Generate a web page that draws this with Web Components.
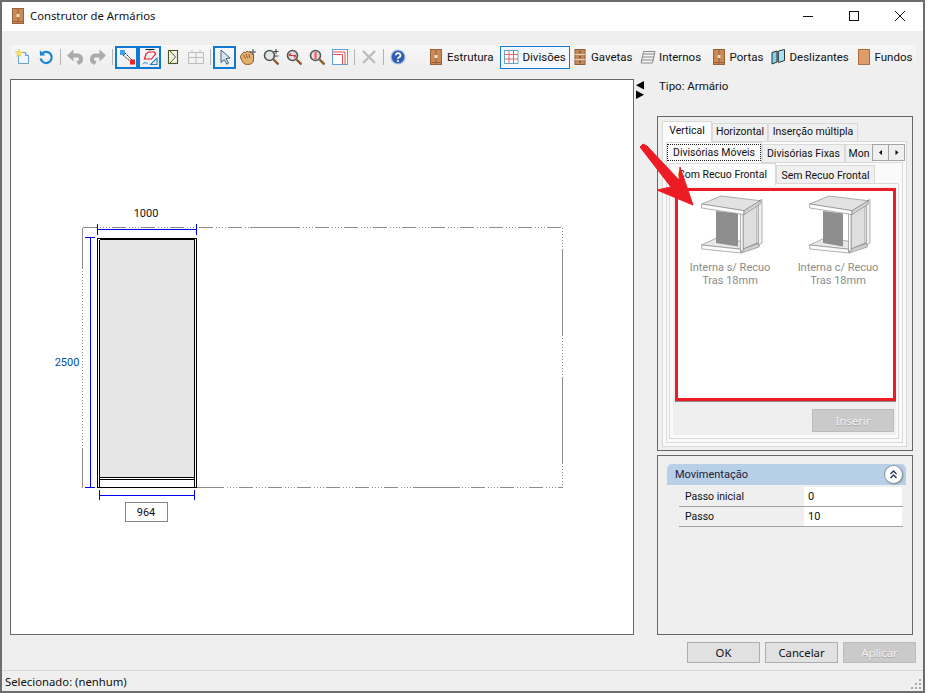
<!DOCTYPE html>
<html lang="pt">
<head>
<meta charset="utf-8">
<title>Construtor de Armários</title>
<style>
  html, body { margin: 0; background: #fff; }
  body { font: 11.5px Roboto, "Liberation Sans", sans-serif; color: #111; }
</style>
</head>
<body>
<win-dialog>
  <title-bar slot="title">Construtor de Armários</title-bar>

  <tool-bar slot="tools">
    <tool-btn icon="new"></tool-btn>
    <tool-btn icon="refresh"></tool-btn>
    <tool-sep></tool-sep>
    <tool-btn icon="undo"></tool-btn>
    <tool-btn icon="redo"></tool-btn>
    <tool-sep></tool-sep>
    <tool-btn icon="snap" active></tool-btn>
    <tool-btn icon="shapes" active></tool-btn>
    <tool-btn icon="bracket"></tool-btn>
    <tool-btn icon="grid-off"></tool-btn>
    <tool-sep></tool-sep>
    <tool-btn icon="cursor" active></tool-btn>
    <tool-btn icon="hand"></tool-btn>
    <tool-btn icon="zoom-pm"></tool-btn>
    <tool-btn icon="zoom-h"></tool-btn>
    <tool-btn icon="zoom-v"></tool-btn>
    <tool-btn icon="corner"></tool-btn>
    <tool-sep></tool-sep>
    <tool-btn icon="cross"></tool-btn>
    <tool-sep></tool-sep>
    <tool-btn icon="help"></tool-btn>
    <tool-gap></tool-gap>
    <tool-btn icon="door" label="Estrutura" style="--w:73px;--pad:0px"></tool-btn>
    <tool-btn icon="grid" label="Divisões" active style="--w:70px;--pad:2.5px"></tool-btn>
    <tool-btn icon="drawers" label="Gavetas" style="--w:67px;--pad:1px"></tool-btn>
    <tool-btn icon="shelves" label="Internos" style="--w:72px;--pad:2px"></tool-btn>
    <tool-btn icon="door" label="Portas" style="--w:58px;--pad:.5px"></tool-btn>
    <tool-btn icon="sliding" label="Deslizantes" style="--w:86px;--pad:2.5px"></tool-btn>
    <tool-btn icon="back" label="Fundos" style="--w:63px;--pad:1.5px"></tool-btn>
  </tool-bar>

  <drawing-view slot="canvas"></drawing-view>
  <split-arrows slot="split"></split-arrows>

  <side-column slot="side">
    <span slot="type">Tipo: Armário</span>
    <frame-box slot="top">
      <tab-box tabs="Vertical|Horizontal|Inserção múltipla" widths="50,56,90" style="--pl:3px;--tbm:2px">
        <tab-box tabs="Divisórias Móveis|Divisórias Fixas|Mon" widths="96,83,28" focus scroll style="--pl:2px;--tbm:0px">
          <tab-box tabs="Com Recuo Frontal|Sem Recuo Frontal" widths="107,99" last style="--tt:2px">
            <item-list>
              <item-card line1="Interna s/ Recuo" line2="Tras 18mm" back="26" backw="21"></item-card>
              <item-card line1="Interna c/ Recuo" line2="Tras 18mm" back="25" backw="19"></item-card>
            </item-list>
            <action-row>
              <dlg-button disabled style="--w:82px;--h:23px">Inserir</dlg-button>
            </action-row>
          </tab-box>
        </tab-box>
      </tab-box>
    </frame-box>
    <frame-box slot="bottom">
      <prop-group title="Movimentação">
        <prop-row label="Passo inicial" value="0"></prop-row>
        <prop-row label="Passo" value="10"></prop-row>
      </prop-group>
    </frame-box>
  </side-column>

  <dlg-button slot="buttons">OK</dlg-button>
  <dlg-button slot="buttons">Cancelar</dlg-button>
  <dlg-button slot="buttons" disabled>Aplicar</dlg-button>

  <span slot="status">Selecionado: (nenhum)</span>
</win-dialog>

<script>
const ICONS = {
  new: `<path d="M3.5 3.5h7l3 3v8h-10z" fill="#eef6fd" stroke="#6f9fc9"/><path d="M10.5 3.5v3h3" fill="#cfe3f5" stroke="#6f9fc9"/><path d="M4 0l1 2.6L7.8 3 5.6 4.7 6.3 7.5 4 6 1.7 7.5l.7-2.8L.2 3 3 2.6z" fill="#f7e36a" stroke="#e0c040" stroke-width=".4"/>`,
  refresh: `<path d="M4 4.6A5.6 5.6 0 1 1 2.6 9.5" fill="none" stroke="#1b84d6" stroke-width="2.2"/><path d="M1.8 1.2l.2 5.6 5.4-.6z" fill="#1b84d6"/>`,
  undo: `<path d="M5 6.5h5a3.6 3.6 0 0 1 2 6.8l-1.500 1" fill="none" stroke="#ababab" stroke-width="4"/><path d="M0 6.5l6.500-6v12z" fill="#ababab"/>`,
  redo: `<path d="M11 6.5H6a3.6 3.6 0 0 0-2 6.800l1.500 1" fill="none" stroke="#ababab" stroke-width="4"/><path d="M16 6.500l-6.500-6v12z" fill="#ababab"/>`,
  snap: `<rect x="1" y="1" width="5" height="5" fill="#46a0e6"/><path d="M4 6l9 8M6 4l8 8" stroke="#222" stroke-width="1" stroke-dasharray="2 1"/><rect x="11" y="10.5" width="5" height="5" fill="#e8262a"/>`,
  shapes: `<path d="M3.5 .5h9M8 .5v1" stroke="#222" fill="none"/><path d="M4 5l2.5-2h6l1 2-4 5H2.5z" fill="none" stroke="#e21c24" stroke-width="1.2"/><path d="M15 15.5H8.5L15 9z" fill="none" stroke="#1b84d6" stroke-width="1.1"/><path d="M.8 15a3 3 0 0 1 5 0" fill="none" stroke="#1b84d6"/>`,
  bracket: `<rect x="3.5" y="1.5" width="9" height="13" fill="#f4f4ea" stroke="#4d5a22" stroke-width="1.1"/><path d="M5 2l5.5 6L5 14" fill="none" stroke="#4d5a22"/>`,
  "grid-off": `<path d="M.5 3.5h15v11H.5zM.5 8.5h15M8 3.5v11M4 1v2.5M12 1v2.5" fill="#f3f3f3" stroke="#bdbdbd"/>`,
  cursor: `<path d="M4 1l9 8-4 .6 2.6 4.6-1.8 1-2.6-4.6L4 13.5z" fill="#dbe6f3" stroke="#3c5f86"/>`,
  hand: `<path d="M0 8c1-2 2.5-4 4-5l1.5.5L7 2l1.5 1 1.5-.5L11.5 4l2 1.5V12c-1 2.5-3 3.5-6 3.5-3.5 0-5-2-5.5-4z" fill="#e2b06c" stroke="#7a4d1e" stroke-width=".9"/><path d="M3.5 6l2 3.5M6 5l1.5 4M9 5l.5 4" stroke="#7a4d1e" stroke-width=".8"/><path d="M13 0v6M10 3h6" stroke="#444"/>`,
  "zoom-pm": `<circle cx="6.5" cy="6.5" r="5" fill="#dfe6ea" stroke="#555" stroke-width="1.6"/><path d="M10.5 10.5l5 5" stroke="#8a5a2a" stroke-width="2.4"/><path d="M13 0v5M10.5 2.5h5M10.5 7h5" stroke="#444"/>`,
  "zoom-h": `<circle cx="6.5" cy="6.5" r="5" fill="#e0e0e0" stroke="#555" stroke-width="1.6"/><path d="M10.5 10.5l5 5" stroke="#8a5a2a" stroke-width="2.4"/><path d="M3 6.5h7M3 6.5l2-2M10 6.5l-2 2" stroke="#d8323a" stroke-width="1.2" fill="none"/>`,
  "zoom-v": `<circle cx="6.5" cy="6.5" r="5" fill="#e0e0e0" stroke="#555" stroke-width="1.6"/><path d="M10.5 10.5l5 5" stroke="#8a5a2a" stroke-width="2.4"/><path d="M6.5 2.8v7.4" stroke="#e8656b" stroke-width="2.4"/>`,
  corner: `<rect x=".5" y=".5" width="15" height="15" fill="#fdfdfd" stroke="#5da2d8"/><path d="M.5 3h12.5v12.5M.5 5.5h10v10" fill="none" stroke="#e05055"/>`,
  cross: `<path d="M2 2l12 12M14 2L2 14" stroke="#bcbcbc" stroke-width="2.4"/>`,
  help: `<circle cx="8" cy="8" r="7" fill="#2f5fae" stroke="#a9c1e2" stroke-width="1.2"/><path d="M5.8 6.2a2.3 2.2 0 1 1 3.2 2.1c-.7.4-1 .8-1 1.6" fill="none" stroke="#fff" stroke-width="1.7"/><circle cx="8" cy="12" r="1.1" fill="#fff"/>`,
  door: `<rect x="2.5" y=".5" width="11" height="15" fill="#c98a57" stroke="#9a6236"/><path d="M8 .5v15M2.5 13.5h11" stroke="#9a6236"/><rect x="6.6" y="6" width="2.8" height="3" fill="#eee0cf"/>`,
  grid: `<rect x=".5" y="1.5" width="13.5" height="13" fill="#fff" stroke="#6ba5d4"/><path d="M.5 5.5h13.5M.5 10h13.5M5 1.5v13M9.5 1.5v13" stroke="#e2646a"/>`,
  drawers: `<rect x="3" y=".5" width="10" height="15" fill="#c08a5c" stroke="#8d5d34"/><path d="M3 5.5h10M3 10.5h10" stroke="#e8d0b4"/><path d="M7 3h2M7 8h2M7 13h2" stroke="#503318"/>`,
  shelves: `<path d="M3.5 2.5H15L12.5 14H1z" fill="#f2f2f2" stroke="#8a8a8a"/><path d="M3 5h11.5M2.4 8h11.6M1.8 11h11.6" stroke="#8a8a8a"/>`,
  sliding: `<path d="M1 3.5l5-1.5v11l-5 2z" fill="#7fd2ea" stroke="#333"/><path d="M7.5 2l6-1.5v11l-6 2z" fill="#a4e2f2" stroke="#333"/><path d="M6 2l1.5 0v11H6z" fill="#666"/>`,
  back: `<rect x="2.5" y=".5" width="11" height="15" fill="#df9d68" stroke="#a96e3d"/>`
};

class UiIcon extends HTMLElement {
  constructor() {
    super();
    this.attachShadow({ mode: "open" });
  }

  connectedCallback() {
    const name = this.getAttribute("name");
    this.shadowRoot.innerHTML = /* html */`
    <style>
      :host { display: inline-flex; width: 16px; height: 16px; flex: none; }
      svg { display: block; }
    </style>
    <svg width="16" height="16" viewBox="0 0 16 16">${ICONS[name] || ""}</svg>`;
  }
}
customElements.define("ui-icon", UiIcon);

class WinDialog extends HTMLElement {
  constructor() {
    super();
    this.attachShadow({ mode: "open" });
    this.shadowRoot.innerHTML = /* html */`
    <style>
      :host {
        display: flex;
        flex-direction: column;
        box-sizing: border-box;
        width: 925px;
        height: 693px;
        border: 2px solid #6d6d6d;
        background: #efefef;
        position: relative;
      }
      .main { display: flex; margin: 10px 0 0 8px; height: 556px; }
      .buttons { display: flex; justify-content: flex-end; gap: 5px; margin: 7px 7px 0 0; }
      .status {
        position: relative;
        flex: 1;
        margin-top: 7px;
        border-top: 1px solid #d7d7d7;
        padding: 1px 0 0 3px;
        display: flex;
        align-items: center;
        font: 11.3px "Noto Sans", "Liberation Sans", sans-serif;
      }
      .grip { position: absolute; right: 1px; bottom: 1px; }
      .arrow { position: absolute; z-index: 5; left: -2px; top: -2px; pointer-events: none; }
    </style>
    <slot name="title"></slot>
    <slot name="tools"></slot>
    <div class="main">
      <slot name="canvas"></slot>
      <slot name="split"></slot>
      <slot name="side"></slot>
    </div>
    <div class="buttons"><slot name="buttons"></slot></div>
    <div class="status">
      <slot name="status"></slot>
      <svg class="grip" width="12" height="12" fill="#a9a9a9">
        <rect x="9" y="1" width="2" height="2"/><rect x="5" y="5" width="2" height="2"/><rect x="9" y="5" width="2" height="2"/>
        <rect x="1" y="9" width="2" height="2"/><rect x="5" y="9" width="2" height="2"/><rect x="9" y="9" width="2" height="2"/>
      </svg>
    </div>
    <svg class="arrow" width="925" height="693">
      <path d="M640 147 643 144 647 146 679 180 680 167 693 205 657 190 671 187z" fill="#ed1c24" stroke="#ed1c24" stroke-linejoin="round"/>
    </svg>`;
  }
}
customElements.define("win-dialog", WinDialog);

class TitleBar extends HTMLElement {
  constructor() {
    super();
    this.attachShadow({ mode: "open" });
    this.shadowRoot.innerHTML = /* html */`
    <style>
      :host {
        display: flex;
        align-items: center;
        box-sizing: border-box;
        height: 29px;
        padding-bottom: 2px;
        background: #fff;
        font: 11.3px "Noto Sans", "Liberation Sans", sans-serif;
        color: #111;
      }
      .app { margin: 0 4px 0 8px; }
      .text { flex: 1; }
      .wbtn { width: 46px; height: 27px; display: flex; align-items: center; justify-content: center; }
      svg { display: block; }
    </style>
    <ui-icon class="app" name="door"></ui-icon>
    <span class="text"><slot></slot></span>
    <span class="wbtn"><svg width="10" height="10"><path d="M0 5.5h10" stroke="#111"/></svg></span>
    <span class="wbtn"><svg width="10" height="10"><rect x=".5" y=".5" width="9" height="9" fill="none" stroke="#111"/></svg></span>
    <span class="wbtn"><svg width="10" height="10"><path d="M0 0l10 10M10 0L0 10" stroke="#111"/></svg></span>`;
  }
}
customElements.define("title-bar", TitleBar);

class ToolBar extends HTMLElement {
  constructor() {
    super();
    this.attachShadow({ mode: "open" });
    this.shadowRoot.innerHTML = /* html */`
    <style>
      :host {
        display: flex;
        align-items: center;
        height: 24px;
        margin: 14px 7px 0 9px;
        background: linear-gradient(#f7f7f7, #eeeeee);
        border-radius: 3px 3px 0 0;
      }
    </style>
    <slot></slot>`;
  }
}
customElements.define("tool-bar", ToolBar);

class ToolBtn extends HTMLElement {
  constructor() {
    super();
    this.attachShadow({ mode: "open" });
  }

  connectedCallback() {
    const label = this.getAttribute("label");
    this.shadowRoot.innerHTML = /* html */`
    <style>
      :host {
        display: flex;
        align-items: center;
        justify-content: ${label ? "flex-start" : "center"};
        box-sizing: border-box;
        flex: none;
        gap: 3px;
        width: var(--w, 23px);
        height: 23px;
        padding-left: var(--pad, 0);
        border: 1px solid transparent;
        font-size: 11.5px;
        white-space: nowrap;
      }
      :host([active]) { border: 2px solid #0f78d2; }
      :host([active][label]) { border-width: 1px; background: #f4f8fc; }
    </style>
    <ui-icon name="${this.getAttribute("icon")}"></ui-icon>${label ? `<span>${label}</span>` : ""}`;
  }
}
customElements.define("tool-btn", ToolBtn);

class ToolSep extends HTMLElement {
  constructor() {
    super();
    this.attachShadow({ mode: "open" });
    this.shadowRoot.innerHTML = /* html */`
    <style>
      :host { display: flex; flex: none; width: 6px; height: 16px; justify-content: center; }
      i { width: 1px; background: #b4b4b4; }
    </style>
    <i></i>`;
  }
}
customElements.define("tool-sep", ToolSep);

class ToolGap extends HTMLElement {
  constructor() {
    super();
    this.attachShadow({ mode: "open" }).innerHTML = `<style>:host { display: block; flex: none; width: 18px; }</style>`;
  }
}
customElements.define("tool-gap", ToolGap);

class DrawingView extends HTMLElement {
  constructor() {
    super();
    this.attachShadow({ mode: "open" });
    this.shadowRoot.innerHTML = /* html */`
    <style>
      :host {
        display: block;
        box-sizing: border-box;
        flex: none;
        width: 624px;
        height: 556px;
        border: 1px solid #666;
        background: #fff;
      }
      svg { display: block; }
      text { font: 11px Roboto, "Liberation Sans", sans-serif; text-anchor: middle; }
    </style>
    <svg width="622" height="554" viewBox="11 80 622 554" shape-rendering="crispEdges">
      <g fill="none" stroke="#8c8c8c">
        <path d="M82.5 228V268M82.5 449V487.5M197 487.5H210M250 227.5H290M415 487.5H460M562.5 250V335M562.5 377V463"/>
        <path d="M82.5 268V449M562.5 227.5V250M562.5 335V377M562.5 463V487.5" stroke-dasharray="1 2"/>
        <path d="M82.5 227.5H562.5M210 487.5H562.5" stroke-dasharray="14 3 1 2 1 2 1 2 1 2"/>
      </g>
      <rect x="100" y="240" width="94" height="237" fill="#e6e6e6"/>
      <g fill="none" stroke="#000">
        <rect x="97.5" y="238.5" width="99" height="249"/>
        <path d="M99.5 239.5V487M194.5 239.5V487M99.5 239.5H194.5"/>
        <path d="M99.5 477.5H194.5M99.5 479.5H194.5"/>
      </g>
      <g fill="none" stroke="#0000f0">
        <path d="M97.5 224V235M196.5 224V235M97.5 229.5H196.5"/>
        <path d="M85 237.5H95M85 487.5H95M90.5 237.5V487.5"/>
        <path d="M99.5 490V500M194.5 490V500M99.5 495.5H194.5"/>
      </g>
      <text x="146" y="217" fill="#111">1000</text>
      <text x="67" y="366" fill="#00509e">2500</text>
      <rect x="125.5" y="502.5" width="42" height="19" fill="#fff" stroke="#858585"/>
      <text x="146" y="516" fill="#111">964</text>
    </svg>`;
  }
}
customElements.define("drawing-view", DrawingView);

class SplitArrows extends HTMLElement {
  constructor() {
    super();
    this.attachShadow({ mode: "open" });
    this.shadowRoot.innerHTML = /* html */`
    <style>
      :host { display: block; flex: none; width: 8px; margin: 2px 13px 0 2px; }
      svg { display: block; }
    </style>
    <svg width="8" height="18"><path d="M8 0v8.5L0 4.2zM0 9.5v8.5l8-4.2z" fill="#000"/></svg>`;
  }
}
customElements.define("split-arrows", SplitArrows);

class SideColumn extends HTMLElement {
  constructor() {
    super();
    this.attachShadow({ mode: "open" });
    this.shadowRoot.innerHTML = /* html */`
    <style>
      :host { display: flex; flex-direction: column; width: 256px; flex: none; }
      .type { height: 37px; padding: 0 0 0 2px; line-height: 14px; box-sizing: border-box; }
      ::slotted([slot="top"]) { height: 335px; }
      ::slotted([slot="bottom"]) { height: 180px; margin-top: 4px; }
    </style>
    <div class="type"><slot name="type"></slot></div>
    <slot name="top"></slot>
    <slot name="bottom"></slot>`;
  }
}
customElements.define("side-column", SideColumn);

class FrameBox extends HTMLElement {
  constructor() {
    super();
    this.attachShadow({ mode: "open" });
    this.shadowRoot.innerHTML = /* html */`
    <style>
      :host {
        display: flex;
        box-sizing: border-box;
        border: 1px solid #666;
        padding: 4px 5px 3px 4px;
      }
    </style>
    <slot></slot>`;
  }
}
customElements.define("frame-box", FrameBox);

class TabBox extends HTMLElement {
  constructor() {
    super();
    this.attachShadow({ mode: "open" });
  }

  connectedCallback() {
    const names = this.getAttribute("tabs").split("|");
    const widths = this.getAttribute("widths").split(",");
    const focus = this.hasAttribute("focus");
    const tabs = names.map((name, i) => /* html */`
      <div class="tab ${i === 0 ? "on" : ""}" style="width:${widths[i]}px">
        <span class="${i === 0 && focus ? "focus" : ""}">${name}</span>
      </div>`).join("");
    const scroll = this.hasAttribute("scroll") ? /* html */`
      <div class="scroll">
        <svg width="15" height="15"><path d="M9 5v5L6 7.500z" fill="#000"/></svg>
        <svg width="15" height="15"><path d="M6.500 5v5l3-2.500z" fill="#000"/></svg>
      </div>` : "";
    this.shadowRoot.innerHTML = /* html */`
    <style>
      :host { display: flex; flex-direction: column; flex: 1; min-width: 0; }
      .strip { display: flex; flex: none; height: 20px; position: relative; white-space: nowrap; font-size: 10.5px; }
      .tab {
        box-sizing: border-box;
        flex: none;
        height: 18px;
        margin-top: 2px;
        padding: var(--tt, 0px) 0 var(--tbm, 0px);
        border: 1px solid #d9d9d9;
        border-width: 1px 1px 0 1px;
        background: #f0f0f0;
        display: flex;
        align-items: center;
        justify-content: center;
        overflow: hidden;
      }
      .tab.on {
        position: relative;
        z-index: 1;
        height: 22px;
        margin-top: 0;
        padding-bottom: calc(3px + var(--tbm, 0px));
        background: #fcfcfc;
      }
      .focus { outline: 1px dotted #222; box-sizing: border-box; width: 92px; padding: 1px 0; text-align: center; }
      .page {
        flex: 1;
        display: flex;
        flex-direction: column;
        min-height: 0;
        box-sizing: border-box;
        border: 1px solid #d9d9d9;
        background: #fafafa;
        padding: ${this.hasAttribute("last") ? "3px 2px 3px 3px" : "0 3px 3px var(--pl, 3px)"};
      }
      .inner { flex: 1; display: flex; flex-direction: column; min-height: 0; }
      :host([last]) .inner { background: #efefef; padding: 1px 0 0 2px; }
      .scroll {
        position: absolute;
        z-index: 2;
        right: -2px;
        top: 2px;
        display: flex;
      }
      .scroll svg { display: block; border: 1px solid #a6a6a6; margin-left: -1px; background: #efefef; }
    </style>
    <div class="strip">${tabs}${scroll}</div>
    <div class="page"><div class="inner"><slot></slot></div></div>`;
  }
}
customElements.define("tab-box", TabBox);

class ItemList extends HTMLElement {
  constructor() {
    super();
    this.attachShadow({ mode: "open" });
    this.shadowRoot.innerHTML = /* html */`
    <style>
      :host {
        display: flex;
        align-items: flex-start;
        box-sizing: border-box;
        height: 213px;
        padding: 7px 4px 0 1px;
        background: #fff;
        position: relative;
        box-shadow: 0 1px 0 #8d8d8d;
      }
      .mark { position: absolute; inset: 0; border: 3px solid #ed1c24; }
    </style>
    <slot></slot>
    <div class="mark"></div>`;
  }
}
customElements.define("item-list", ItemList);

class ItemCard extends HTMLElement {
  constructor() {
    super();
    this.attachShadow({ mode: "open" });
  }

  connectedCallback() {
    const x = +this.getAttribute("back");
    const w = +this.getAttribute("backw");
    this.shadowRoot.innerHTML = /* html */`
    <style>
      :host {
        display: flex;
        flex-direction: column;
        align-items: center;
        flex: none;
        width: 108px;
        color: #8b8b8b;
        font-size: 11px;
        line-height: 13px;
        text-align: center;
      }
      svg { display: block; margin-bottom: 4px; margin-left: 2px; }
    </style>
    <svg width="64" height="62" viewBox="8 5 64 62">
      <g stroke="#7d7d7d" stroke-width=".6">
        <path d="M10.7 55 25 48.3 68.3 53.3 50 59.3z" fill="#e8e8e8"/>
        <path d="M10.7 55 50 59.3V63L10.7 59z" fill="#fbfbfb"/>
        <path d="M50 59.3 68.3 53.3V57L50 63z" fill="#cfcfcf"/>
        <path d="M${x - 1} 21 ${x + w} 23.5V56.5L${x - 1} 53z" fill="#8e8e8e" stroke="none"/>
        <path d="M52 23.5 66 14V53L52 59z" fill="#dedede"/>
        <path d="M49.5 23V61H52V23z" fill="#fafafa"/>
        <path d="M67.5 11 71 9.5V53L67.5 55z" fill="#f1f1f1"/>
        <path d="M10.7 14 30 6 69.3 10.7 53 20.7z" fill="#e2e2e2"/>
        <path d="M10.7 14 53 20.7V24.5L10.7 18z" fill="#fdfdfd"/>
        <path d="M53 20.7 69.3 10.7V14L53 24.5z" fill="#d2d2d2"/>
      </g>
    </svg>
    <span>${this.getAttribute("line1")}</span>
    <span>${this.getAttribute("line2")}</span>`;
  }
}
customElements.define("item-card", ItemCard);

class ActionRow extends HTMLElement {
  constructor() {
    super();
    this.attachShadow({ mode: "open" });
    this.shadowRoot.innerHTML = /* html */`
    <style>
      :host { display: flex; justify-content: flex-end; padding: 8px 2px 0 0; }
    </style>
    <slot></slot>`;
  }
}
customElements.define("action-row", ActionRow);

class DlgButton extends HTMLElement {
  constructor() {
    super();
    this.attachShadow({ mode: "open" });
    this.shadowRoot.innerHTML = /* html */`
    <style>
      :host {
        display: flex;
        align-items: center;
        justify-content: center;
        box-sizing: border-box;
        width: var(--w, 73px);
        height: var(--h, 21px);
        border: 1px solid #adadad;
        background: #e1e1e1;
        font: 11.3px "Noto Sans", "Liberation Sans", sans-serif;
        color: #111;
      }
      :host([disabled]) {
        background: #cacaca;
        border-color: #bcbcbc;
        color: #f2f2f2;
        text-shadow: 0 1px 0 #a8a8a8;
      }
    </style>
    <slot></slot>`;
  }
}
customElements.define("dlg-button", DlgButton);

class PropGroup extends HTMLElement {
  constructor() {
    super();
    this.attachShadow({ mode: "open" });
  }

  connectedCallback() {
    this.shadowRoot.innerHTML = /* html */`
    <style>
      :host {
        display: flex;
        flex-direction: column;
        flex: 1;
        padding: 4px 2px 0 5px;
      }
      .head {
        display: flex;
        align-items: center;
        justify-content: space-between;
        box-sizing: border-box;
        height: 21px;
        padding: 0 4px 1px 8px;
        background: #b8cfe8;
        border-radius: 5px 5px 0 0;
        color: #1d1d3c;
        font-size: 11px;
      }
      .toggle {
        display: block;
        border-radius: 50%;
        background: #fff;
        box-shadow: 0 0 0 1px #8a98a8, 1px 1px 2px #777;
      }
      .rows { padding: 2px 3px 0 12px; }
    </style>
    <div class="head">
      <span>${this.getAttribute("title")}</span>
      <svg class="toggle" width="17" height="17">
        <path d="M5.5 8l3-3 3 3M5.5 12l3-3 3 3" fill="none" stroke="#22305a" stroke-width="1.3"/>
      </svg>
    </div>
    <div class="rows"><slot></slot></div>`;
  }
}
customElements.define("prop-group", PropGroup);

class PropRow extends HTMLElement {
  constructor() {
    super();
    this.attachShadow({ mode: "open" });
  }

  connectedCallback() {
    this.shadowRoot.innerHTML = /* html */`
    <style>
      :host {
        display: grid;
        grid-template-columns: 125px 98px 1px;
        height: 20px;
        box-sizing: border-box;
        border-bottom: 1px solid #a3a3a3;
        font-size: 10.5px;
      }
      span { box-sizing: border-box; height: 19px; line-height: 18px; padding-top: 1px; }
      .label { padding-left: 6px; }
      .value { background: #fff; padding-left: 4px; font-size: 11px; }
    </style>
    <span class="label">${this.getAttribute("label")}</span>
    <span class="value">${this.getAttribute("value")}</span>`;
  }
}
customElements.define("prop-row", PropRow);
</script>
</body>
</html>
